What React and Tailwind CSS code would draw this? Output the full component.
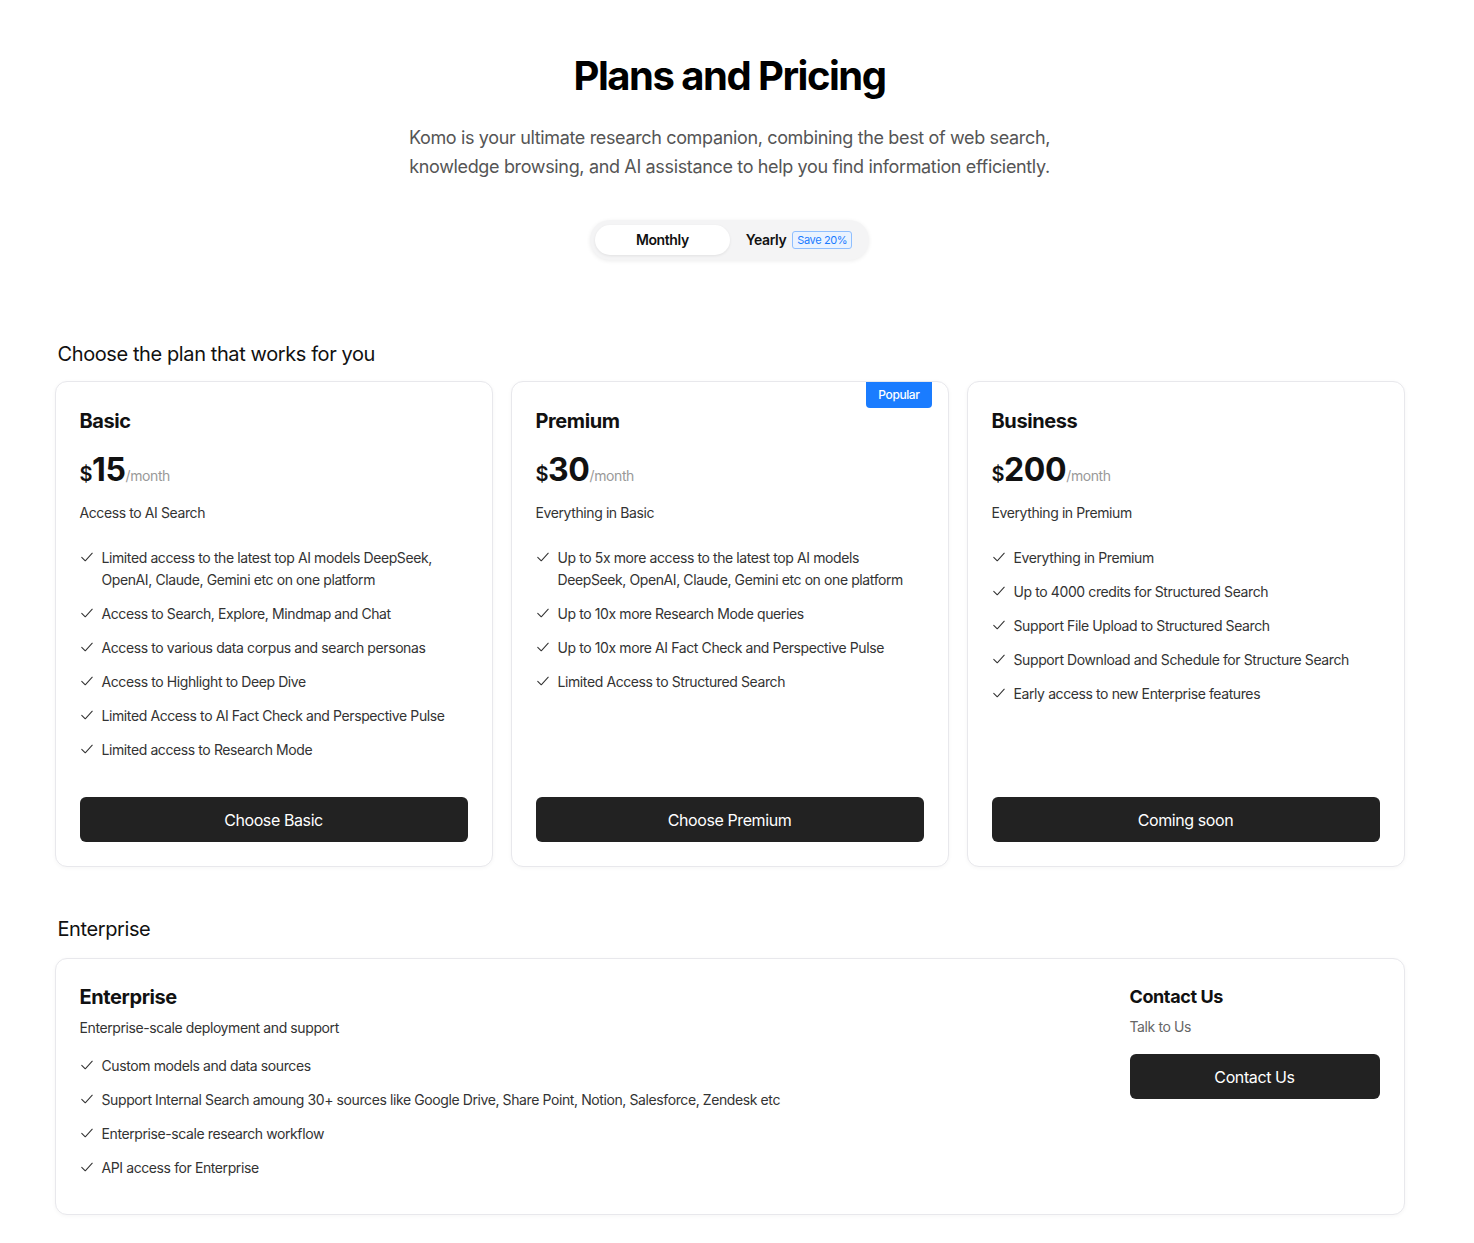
import { useState } from "react";

const Check = () => (
  <svg width="14" height="14" viewBox="0 0 24 24" fill="none" stroke="#333" strokeWidth="1.8" strokeLinecap="round" strokeLinejoin="round" className="mt-[3px] shrink-0">
    <path d="M3 12.5l6 6L21 5.5" />
  </svg>
);

const plans = [
  {
    name: "Basic",
    price: "15",
    lead: "Access to AI Search",
    button: "Choose Basic",
    features: [
      "Limited access to the latest top AI models DeepSeek, OpenAI, Claude, Gemini etc on one platform",
      "Access to Search, Explore, Mindmap and Chat",
      "Access to various data corpus and search personas",
      "Access to Highlight to Deep Dive",
      "Limited Access to AI Fact Check and Perspective Pulse",
      "Limited access to Research Mode"
    ]
  },
  {
    name: "Premium",
    price: "30",
    popular: true,
    lead: "Everything in Basic",
    button: "Choose Premium",
    features: [
      "Up to 5x more access to the latest top AI models DeepSeek, OpenAI, Claude, Gemini etc on one platform",
      "Up to 10x more Research Mode queries",
      "Up to 10x more AI Fact Check and Perspective Pulse",
      "Limited Access to Structured Search"
    ]
  },
  {
    name: "Business",
    price: "200",
    lead: "Everything in Premium",
    button: "Coming soon",
    features: [
      "Everything in Premium",
      "Up to 4000 credits for Structured Search",
      "Support File Upload to Structured Search",
      "Support Download and Schedule for Structure Search",
      "Early access to new Enterprise features"
    ]
  }
];

const enterpriseFeatures = [
  "Custom models and data sources",
  "Support Internal Search amoung 30+ sources like Google Drive, Share Point, Notion, Salesforce, Zendesk etc",
  "Enterprise-scale research workflow",
  "API access for Enterprise"
];

const FeatureList = ({ items }) => (
  <ul className="flex flex-col gap-3">
    {items.map((f) => (
      <li key={f} className="flex gap-2 text-sm leading-[22px] text-[#333]">
        <Check />
        <span>{f}</span>
      </li>
    ))}
  </ul>
);

const PlanCard = ({ plan }) => (
  <div className="relative flex flex-col rounded-xl border border-[#e8e8ec] bg-white px-6 pt-[25px] pb-6 shadow-[0_1px_4px_rgba(0,0,0,0.04)]">
    {plan.popular && (
      <div className="absolute right-4 top-0 rounded-b bg-[#1a7cff] px-3 py-[5px] text-xs font-medium text-white">
        Popular
      </div>
    )}
    <h3 className="text-xl font-bold leading-7 text-[#111]">{plan.name}</h3>
    <div className="mt-[15px] flex items-baseline">
      <span className="text-xl font-semibold text-[#111]">$</span>
      <span className="text-[32px] font-bold leading-10 text-[#111]">{plan.price}</span>
      <span className="text-sm text-[#999]">/month</span>
    </div>
    <p className="mt-[13px] text-sm leading-5 text-[#333]">{plan.lead}</p>
    <div className="mt-[24px] flex-1">
      <FeatureList items={plan.features} />
    </div>
    <button className="mt-9 h-[45px] w-full rounded-md bg-[#222] text-base text-white">
      {plan.button}
    </button>
  </div>
);

export default function App() {
  const [period, setPeriod] = useState("monthly");

  return (
    <div className="min-h-screen bg-white pr-[15px] pb-7 font-['Inter',sans-serif] tracking-[-0.025em] text-[#111]">
      <div className="mx-auto w-[1350px]">
        <div className="flex flex-col items-center pt-[52px]">
          <h1 className="text-[40px] font-bold leading-[48px] tracking-[-1.5px] text-black">Plans and Pricing</h1>
          <p className="mt-[23px] text-center text-lg leading-[29px] tracking-[-0.35px] text-[#555]">
            Komo is your ultimate research companion, combining the best of web search,
            <br />
            knowledge browsing, and AI assistance to help you find information efficiently.
          </p>
          <div className="mt-[39px] flex h-10 items-center rounded-full bg-[#f4f4f5] p-[5px] shadow-[0_1px_4px_rgba(0,0,0,0.08)]">
            <button
              onClick={() => setPeriod("monthly")}
              className={`h-[30px] w-[135px] rounded-full text-sm font-semibold ${period === "monthly" ? "bg-white shadow-[0_1px_3px_rgba(0,0,0,0.08)]" : ""}`}
            >
              Monthly
            </button>
            <button
              onClick={() => setPeriod("yearly")}
              className={`flex h-[30px] items-center gap-[6px] rounded-full pl-4 pr-3 text-sm font-semibold ${period === "yearly" ? "bg-white" : ""}`}
            >
              Yearly
              <span className="rounded-[3px] border border-[#8fbfff] bg-[#eaf3ff] px-1 text-[11px] font-normal leading-4 text-[#1a7cff]">
                Save 20%
              </span>
            </button>
          </div>
        </div>

        <h2 className="mt-[80px] pl-[3px] text-xl leading-7 text-[#111]">Choose the plan that works for you</h2>
        <div className="mt-[13px] grid grid-cols-3 gap-[18px]">
          {plans.map((p) => (
            <PlanCard key={p.name} plan={p} />
          ))}
        </div>

        <h2 className="mt-[48px] pl-[3px] text-xl leading-7 text-[#111]">Enterprise</h2>
        <div className="mt-[15px] flex rounded-xl border border-[#e8e8ec] bg-white px-6 pt-[24px] pb-[35px] shadow-[0_1px_4px_rgba(0,0,0,0.04)]">
          <div className="flex-1">
            <h3 className="text-xl font-bold leading-7">Enterprise</h3>
            <p className="mt-[7px] text-sm leading-5 text-[#333]">Enterprise-scale deployment and support</p>
            <div className="mt-[17px]">
              <FeatureList items={enterpriseFeatures} />
            </div>
          </div>
          <div className="w-[250px]">
            <h3 className="text-lg font-bold leading-7">Contact Us</h3>
            <p className="mt-[6px] text-sm leading-5 text-[#666]">Talk to Us</p>
            <button className="mt-[17px] h-[45px] w-full rounded-md bg-[#222] text-base text-white">
              Contact Us
            </button>
          </div>
        </div>
      </div>
    </div>
  );
}
